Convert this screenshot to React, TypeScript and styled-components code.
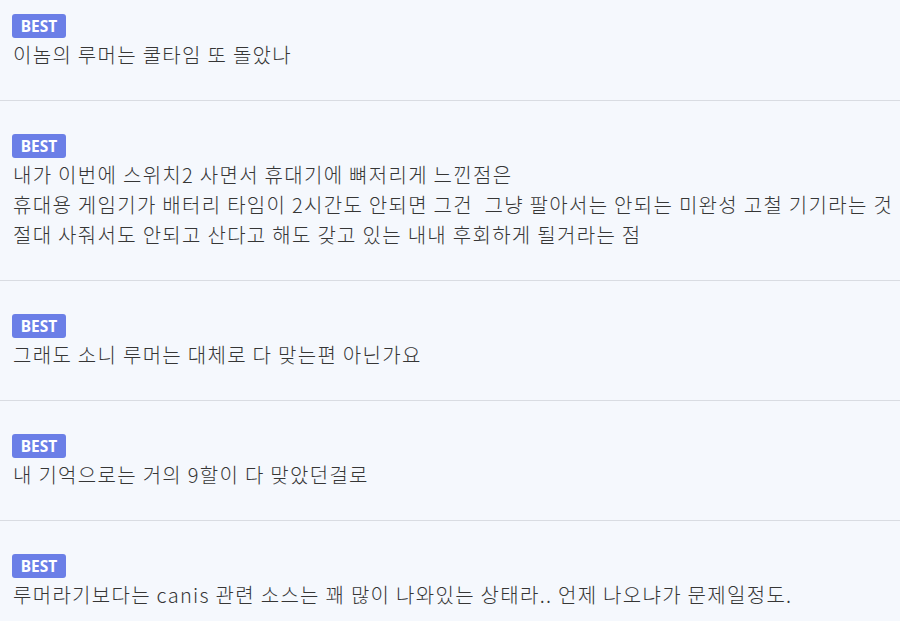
import React from "react";
import styled, { createGlobalStyle } from "styled-components";

const Global = createGlobalStyle`
  html, body { margin: 0; padding: 0; background: #f5f8fd; }
  body { font-family: "Noto Sans CJK KR", "Noto Sans", sans-serif; overflow: hidden; }
`;

const List = styled.div`
  display: flex;
  flex-direction: column;
  width: 900px;
`;

const Item = styled.div`
  display: flex;
  flex-direction: column;
  align-items: flex-start;
  padding: 33px 12px 30px 12px;
  border-bottom: 1px solid #d9dce2;
  &:first-child { padding-top: 14px; }
`;

const Badge = styled.span`
  display: inline-flex;
  align-items: center;
  justify-content: center;
  width: 54px;
  height: 24px;
  border-radius: 3px;
  background: #6b7fe7;
  color: #ffffff;
  font-family: "Noto Sans", "Open Sans", sans-serif;
  font-weight: 700;
  font-size: 15.5px;
  margin-bottom: 2px;
`;

const Body = styled.div`
  font-family: "Noto Sans CJK KR", sans-serif;
  font-weight: 300;
  font-size: 20px;
  letter-spacing: 1.3px;
  line-height: 30px;
  color: #363636;
  padding-left: 1px;
  white-space: pre;
`;

const comments: string[][] = [
  ["이놈의 루머는 쿨타임 또 돌았나"],
  [
    "내가 이번에 스위치2 사면서 휴대기에 뼈저리게 느낀점은",
    "휴대용 게임기가 배터리 타임이 2시간도 안되면 그건  그냥 팔아서는 안되는 미완성 고철 기기라는 것",
    "절대 사줘서도 안되고 산다고 해도 갖고 있는 내내 후회하게 될거라는 점",
  ],
  ["그래도 소니 루머는 대체로 다 맞는편 아닌가요"],
  ["내 기억으로는 거의 9할이 다 맞았던걸로"],
  ["루머라기보다는 canis 관련 소스는 꽤 많이 나와있는 상태라.. 언제 나오냐가 문제일정도."],
];

export default function App() {
  return (
    <>
      <Global />
      <List>
        {comments.map((lines, i) => (
          <Item key={i}>
            <Badge>BEST</Badge>
            {lines.map((l, j) => (
              <Body key={j}>{l}</Body>
            ))}
          </Item>
        ))}
      </List>
    </>
  );
}
